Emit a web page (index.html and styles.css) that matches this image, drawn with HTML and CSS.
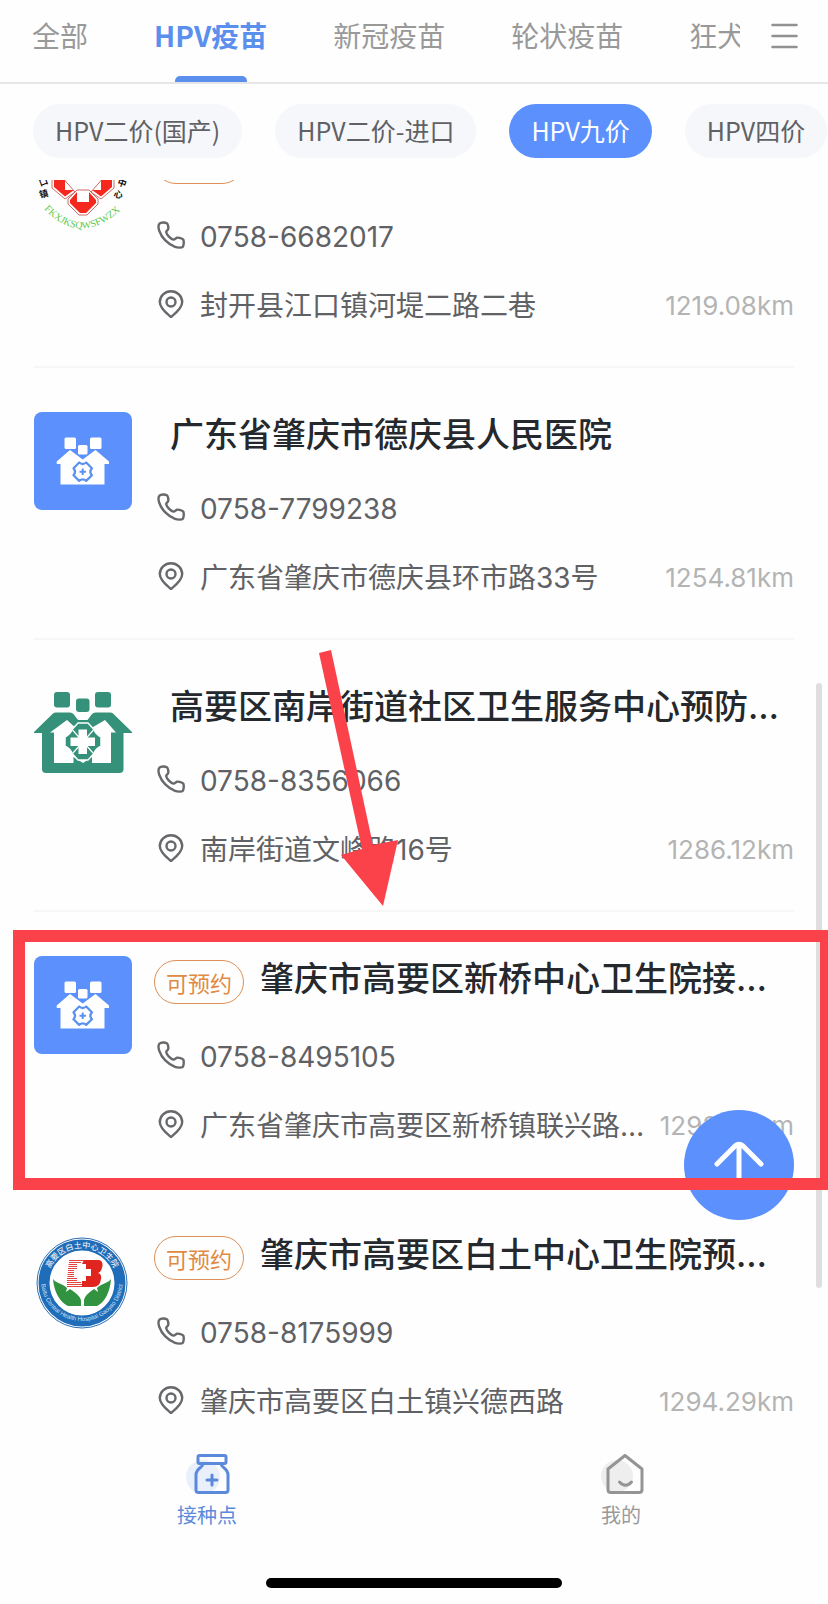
FILE: index.html
```html
<!DOCTYPE html>
<html lang="zh-CN">
<head>
<meta charset="utf-8">
<meta name="viewport" content="width=device-width, initial-scale=1">
<title>接种点</title>
<link rel="stylesheet" href="styles.css">
</head>
<body>
<svg class="defs" aria-hidden="true">
  <symbol id="i-phone" viewBox="0 0 28 28">
    <path d="M2.500 2.600C4 1.300 8 1.200 9.800 2.200C11 3 11.600 6.500 11.200 8C10.900 9.200 9 9.800 9.200 11.200C9.600 13.800 13.600 17.800 16.400 18.600C17.900 19 18.600 16.900 20 16.700C21.700 16.500 25.600 17.300 26.300 18.600C27 20 26.900 24.600 25.800 25.800C24.600 27 20.500 26.700 18 25.800C10.800 23.200 4.600 16.800 2.300 9.800C1.500 7.400 1.300 3.800 2.500 2.600Z"/>
  </symbol>
  <symbol id="i-pin" viewBox="0 0 28 28">
    <path d="M14 27C10.500 24 2.800 18.500 2.800 12C2.800 5.800 8 1.200 14 1.200S25.200 5.800 25.200 12C25.200 18.500 17.500 24 14 27Z"/>
    <circle cx="14" cy="12" r="4.500"/>
  </symbol>
  <symbol id="i-clinic" viewBox="0 0 98 98">
    <g fill="#fff">
      <rect x="30.500" y="25.500" width="11.500" height="11.500" rx="1.500"/>
      <rect x="44" y="33" width="9.500" height="9.500" rx="1.500"/>
      <rect x="56" y="25.500" width="11.500" height="11.500" rx="1.500"/>
      <path d="M36 38L48.700 47.500L61.500 38L75 49.500V52H70.500V72.500H26.500V52H22.700V49.500Z"/>
    </g>
    <path d="M45.200 50.500Q48.700 53.500 52.200 50.500L57.900 56.200Q54.900 59.700 57.900 63.200L52.200 68.900Q48.700 65.900 45.200 68.900L39.500 63.200Q42.500 59.700 39.500 56.200Z" fill="none" stroke="#5b92f0" stroke-width="2.300" stroke-linejoin="round"/>
    <path d="M48.700 56.500V63M45.500 59.700H52" stroke="#5b92f0" stroke-width="2"/>
  </symbol>
</svg>

<div class="app">
  <header class="top">
    <nav class="tabs" aria-label="疫苗类型">
      <a class="tab" href="#all">全部</a>
      <a class="tab tab-on" href="#hpv" aria-current="page">HPV疫苗</a>
      <a class="tab" href="#covid">新冠疫苗</a>
      <a class="tab" href="#rota">轮状疫苗</a>
      <a class="tab" href="#rabies">狂犬疫苗</a>
    </nav>
    <button class="menu" type="button" aria-label="更多">
      <svg viewBox="0 0 26 26"><path d="M1 2H25M1 13H25M1 24H25" stroke="#919191" stroke-width="2.500" stroke-linecap="round"/></svg>
    </button>
  </header>

  <div class="chips">
    <button class="chip" type="button">HPV二价(国产)</button>
    <button class="chip" type="button">HPV二价-进口</button>
    <button class="chip chip-on" type="button">HPV九价</button>
    <button class="chip" type="button">HPV四价</button>
  </div>

  <main class="view">
    <ul class="list">
      <li class="site">
        <svg class="logo" viewBox="0 0 98 98">
          <g stroke="#c2453f" stroke-width="0.800" fill="#fff">
            <path d="M18 40V52L31 63L41 56L27 40Z M80 40V52L67 63L57 56L71 40Z"/>
            <path d="M43 54L34 63V68L45 79H53L64 68V63L55 54Z"/>
          </g>
          <path fill="#f4281f" d="M20 40H31V54H40L31 60.500L20 51Z M78 40H67V54H58L67 60.500L78 51Z M43 56V66H55V56L62 64V67L52 77H46L36 67V64Z"/>
          <path id="arc-a" d="M10 73Q48 113 90 71" fill="none"/>
          <text class="seal-green"><textPath href="#arc-a">FKXJKSQWSFWZX</textPath></text>
          <g class="seal-ink">
            <text x="5" y="49" transform="rotate(-20 9 46)">口</text>
            <text x="5" y="61" transform="rotate(-12 10 57)">镇</text>
            <text x="84" y="50" transform="rotate(20 88 46)">中</text>
            <text x="80" y="62" transform="rotate(12 85 58)">心</text>
          </g>
        </svg>
        <div class="info">
          <div class="head head-tag"><span class="tag">可预约</span></div>
          <p class="row"><svg class="ico"><use href="#i-phone"/></svg><a class="tel" href="tel:0758-6682017">0758-6682017</a></p>
          <p class="row"><svg class="ico"><use href="#i-pin"/></svg><span class="addr">封开县江口镇河堤二路二巷</span><span class="km">1219.08km</span></p>
        </div>
      </li>

      <li class="site">
        <svg class="logo logo-blue"><use href="#i-clinic"/></svg>
        <div class="info">
          <div class="head"><h2 class="name">广东省肇庆市德庆县人民医院</h2></div>
          <p class="row"><svg class="ico"><use href="#i-phone"/></svg><a class="tel" href="tel:0758-7799238">0758-7799238</a></p>
          <p class="row"><svg class="ico"><use href="#i-pin"/></svg><span class="addr">广东省肇庆市德庆县环市路33号</span><span class="km">1254.81km</span></p>
        </div>
      </li>

      <li class="site">
        <svg class="logo" viewBox="0 0 98 98">
          <g fill="#359179">
            <rect x="20" y="8" width="16" height="15.500" rx="3"/>
            <rect x="42" y="14.500" width="13.500" height="13.500" rx="3"/>
            <rect x="61" y="8" width="16" height="15.500" rx="3"/>
            <path d="M0 48L19 29.500Q20 28.500 22 28.500H36Q38 28.500 39.500 30L44 36H53.500L58 30Q59.500 28.500 61.500 28.500H76Q78 28.500 79 29.500L98 48V49H89.500V85Q89.500 89 85.500 89H12Q8 89 8 85V49H0Z"/>
          </g>
          <path fill="#fff" d="M16 48.500L33 36L44 46H54L71 36L82 48.500H77V79H58V73L49 79L39.500 73V79H20V48.500Z"/>
          <path fill="#359179" stroke="#fff" stroke-width="1.500" stroke-linejoin="round" d="M44 39H54L60 45.500Q61.500 50 67 53V62Q61.500 65 60 69.500L54 76H44L38 69.500Q36.500 65 31 62V53Q36.500 50 38 45.500Z"/>
          <path d="M38.500 46L59.500 69.500M59.500 46L38.500 69.500" stroke="#fff" stroke-width="1.200"/>
          <path fill="#fff" d="M44.500 45.500H53V53.500H61V62H53V70H44.500V62H36.500V53.500H44.500Z"/>
        </svg>
        <div class="info">
          <div class="head"><h2 class="name">高要区南岸街道社区卫生服务中心预防接种门诊</h2></div>
          <p class="row"><svg class="ico"><use href="#i-phone"/></svg><a class="tel" href="tel:0758-8356066">0758-8356066</a></p>
          <p class="row"><svg class="ico"><use href="#i-pin"/></svg><span class="addr">南岸街道文峰路16号</span><span class="km">1286.12km</span></p>
        </div>
        <svg class="pointer" viewBox="0 0 80 258" aria-hidden="true">
          <path fill="#fb414a" d="M0 3L12 0L54 195L79 190L64 256L22 205L43 199Z"/>
        </svg>
      </li>

      <li class="site">
        <svg class="logo logo-blue"><use href="#i-clinic"/></svg>
        <div class="info">
          <div class="head head-tag"><span class="tag">可预约</span><h2 class="name">肇庆市高要区新桥中心卫生院接种门诊</h2></div>
          <p class="row"><svg class="ico"><use href="#i-phone"/></svg><a class="tel" href="tel:0758-8495105">0758-8495105</a></p>
          <p class="row"><svg class="ico"><use href="#i-pin"/></svg><span class="addr">广东省肇庆市高要区新桥镇联兴路12号</span><span class="km">1292.62km</span></p>
        </div>
        <div class="frame"></div>
      </li>

      <li class="site">
        <svg class="logo" viewBox="0 0 98 98">
          <circle cx="48" cy="51" r="45" fill="#fff" stroke="#2a6fb4" stroke-width="1"/>
          <circle cx="48" cy="51" r="38" fill="#fff" stroke="#1f6cb8" stroke-width="11"/>
          <path id="arc-b" d="M13 51A35 35 0 0 1 83 51" fill="none"/>
          <path id="arc-c" d="M7 48A41 41 0 0 0 89 48" fill="none"/>
          <text class="seal-top"><textPath href="#arc-b" startOffset="50%">高要区白土中心卫生院</textPath></text>
          <text class="seal-low"><textPath href="#arc-c" startOffset="50%">Baitu Central Health Hospital Gaoyao District</textPath></text>
          <path fill="#31923f" d="M19 47C21 51 30 52 33 56L32 60L36 57C42 61 47 65 47 69V74H34C26 70 20 60 19 47Z M77 47C75 51 66 52 63 56L64 60L60 57C54 61 50 65 50 69V74H63C71 70 76 60 77 47Z"/>
          <path fill="none" stroke="#e2453f" stroke-width="1.200" d="M35 28.500H50M35 30.500H47M34.500 32.500H43M34.500 34.500H43M34 36.500H43M34 38.500H40M34 40.500H40M33.500 42.500H40M33.500 44.500H40M33 46.500H43M33 48.500H43M33 50.500H47M33 52.500H48M33 54.500H48"/>
          <path fill="#e0251f" d="M50 28H64Q69 28 68.500 34Q67.500 40 64 41Q68 42 67 47Q66 55 59 55H48V49H52V44H57V37H52V32H48Z"/>
        </svg>
        <div class="info">
          <div class="head head-tag"><span class="tag">可预约</span><h2 class="name">肇庆市高要区白土中心卫生院预防接种门诊</h2></div>
          <p class="row"><svg class="ico"><use href="#i-phone"/></svg><a class="tel" href="tel:0758-8175999">0758-8175999</a></p>
          <p class="row"><svg class="ico"><use href="#i-pin"/></svg><span class="addr">肇庆市高要区白土镇兴德西路</span><span class="km">1294.29km</span></p>
        </div>
      </li>
    </ul>
  </main>

  <nav class="dock" aria-label="主导航">
    <a class="dock-item dock-on" href="#sites">
      <svg viewBox="0 0 52 44">
        <circle cx="22" cy="25" r="17" fill="#e9effb"/>
        <g fill="none" stroke="#5c8adb" stroke-width="3" stroke-linejoin="round" stroke-linecap="round">
          <rect x="17" y="3.500" width="28" height="8" rx="1.500"/>
          <path d="M22 12C22 15.500 15 16 15 23V38Q15 40.500 17.500 40.500H44.500Q47 40.500 47 38V23C47 16 40 15.500 40 12M31 23V33M26 28H36"/>
        </g>
      </svg>
      <span>接种点</span>
    </a>
    <a class="dock-item" href="#me">
      <svg viewBox="0 0 52 44">
        <circle cx="22" cy="24" r="16" fill="#eeeeee"/>
        <g fill="none" stroke="#949494" stroke-width="3" stroke-linejoin="round" stroke-linecap="round">
          <path d="M30 3.500L47 17V37.500Q47 40.500 44 40.500H16Q13 40.500 13 37.500V17Z"/>
          <path d="M24.500 30Q30.500 36.500 36.500 30"/>
        </g>
      </svg>
      <span>我的</span>
    </a>
  </nav>
  <div class="home"></div>

  <div class="thumb"></div>
  <button class="fab" type="button" aria-label="返回顶部">
    <svg viewBox="0 0 52 52"><path d="M4 25L22 7Q26 3.500 30 7L48 25M26 6V44" fill="none" stroke="#fff" stroke-width="5" stroke-linecap="round"/></svg>
  </button>
</div>
</body>
</html>
```
FILE: styles.css
```css
* { box-sizing: border-box; }

body {
  margin: 0;
  background: #fefefe;
  color: #5f6164;
  font-family: "Noto Sans CJK SC", sans-serif;
}

a { color: inherit; text-decoration: none; }
button { border: 0; padding: 0; font: inherit; color: inherit; }
.defs { position: absolute; width: 0; height: 0; }

.app {
  position: relative;
  display: flex;
  flex-direction: column;
  height: 100vh;
  overflow: hidden;
}

.top {
  display: flex;
  flex: none;
  height: 84px;
  padding: 0 30px 0 32px;
  border-bottom: 2px solid #e6e6e8;
}
.tabs {
  display: flex;
  flex: 1;
  gap: 66px;
  min-width: 0;
  overflow: hidden;
}
.tab {
  position: relative;
  flex: none;
  font-size: 28px;
  line-height: 70px;
  color: #999;
}
.tab-on { color: #5b8fee; font-weight: 700; }
.tab-on::after {
  content: "";
  position: absolute;
  bottom: 0;
  left: calc(50% - 36px);
  width: 72px;
  height: 6px;
  border-radius: 5px 5px 0 0;
  background: #5b8fee;
}
.menu {
  display: flex;
  align-items: center;
  flex: none;
  height: 72px;
  margin-left: 31px;
  background: none;
}
.menu svg { width: 27px; height: 26px; }

.chips {
  display: flex;
  flex: none;
  gap: 33px;
  height: 96px;
  padding: 20px 0 22px 33px;
  overflow: hidden;
}
.chip {
  flex: none;
  padding: 0 22px 2px;
  border-radius: 27px;
  background: #f6f7fb;
  font-size: 25px;
}
.chip-on { background: #5b90fd; color: #fff; }

.view { flex: 1; min-height: 0; overflow: hidden; }
.list { margin: -88px 0 0; padding: 0 34px; list-style: none; }
.site {
  position: relative;
  display: flex;
  gap: 22px;
  padding: 44px 0;
  border-bottom: 2px solid #f6f6f7;
}
.logo { flex: none; width: 98px; height: 98px; }
.logo-blue { border-radius: 8px; background: #5b90fd; }
.seal-green { font: 10px "Liberation Serif", serif; fill: #5fc94d; }
.seal-ink { font-size: 9px; font-weight: 700; fill: #111; }
.seal-top { font-size: 8px; fill: #fff; text-anchor: middle; }
.seal-low { font: 6px "Liberation Sans", sans-serif; fill: #cfe2f6; text-anchor: middle; }

.info {
  display: flex;
  flex: 1;
  flex-direction: column;
  gap: 37px;
  min-width: 0;
}
.head { display: flex; height: 44px; padding-left: 16px; }
.head-tag { gap: 16px; height: 48px; padding-left: 0; }
.tag {
  flex: none;
  align-self: flex-end;
  height: 44px;
  padding: 0 11px;
  border: 1px solid #dd9055;
  border-radius: 22px;
  color: #e08a45;
  font-size: 22px;
  line-height: 42px;
}
.name {
  margin: 0;
  min-width: 0;
  overflow: hidden;
  color: #25282c;
  font-family: Inter, "Noto Sans CJK SC", sans-serif;
  font-size: 34px;
  font-weight: 500;
  line-height: 46px;
  text-overflow: ellipsis;
  white-space: nowrap;
}
.row { display: flex; height: 32px; margin: 0; line-height: 32px; }
.ico {
  flex: none;
  width: 28px;
  height: 28px;
  margin: 0 15px 0 3px;
  fill: none;
  stroke: #66686b;
  stroke-width: 2.4;
}
.tel { font-family: Inter, sans-serif; font-size: 28px; }
.addr {
  flex: 1;
  min-width: 0;
  overflow: hidden;
  font-family: Inter, "Noto Sans CJK SC", sans-serif;
  font-size: 28px;
  text-overflow: ellipsis;
  white-space: nowrap;
}
.km {
  flex: none;
  margin-left: 10px;
  color: #b4b4b4;
  font-family: Inter, sans-serif;
  font-size: 26px;
}

.frame {
  position: absolute;
  z-index: 3;
  top: 18px;
  right: -38px;
  bottom: -4px;
  left: -21px;
  border: 12px solid #fb414a;
  pointer-events: none;
}
.pointer {
  position: absolute;
  z-index: 3;
  top: 10px;
  left: 285px;
  width: 80px;
  height: 258px;
}

.dock { display: flex; flex: none; height: 138px; padding-top: 12px; background: #fefefe; }
.dock-item {
  display: flex;
  flex: 1;
  flex-direction: column;
  align-items: center;
  gap: 4px;
  color: #999;
  font-size: 20px;
  line-height: 30px;
}
.dock-item svg { width: 52px; height: 44px; }
.dock-on { color: #5c8adb; }
.home {
  flex: none;
  align-self: center;
  width: 296px;
  height: 10px;
  margin-bottom: 16px;
  border-radius: 5px;
  background: #000;
}

.thumb {
  position: absolute;
  top: 683px;
  right: 6px;
  width: 6px;
  height: 605px;
  border-radius: 3px;
  background: #dedede;
}
.fab {
  position: absolute;
  z-index: 2;
  right: 34px;
  bottom: 384px;
  display: grid;
  place-items: center;
  width: 110px;
  height: 110px;
  border-radius: 50%;
  background: #5b90fd;
}
.fab svg { width: 52px; height: 52px; }
```
